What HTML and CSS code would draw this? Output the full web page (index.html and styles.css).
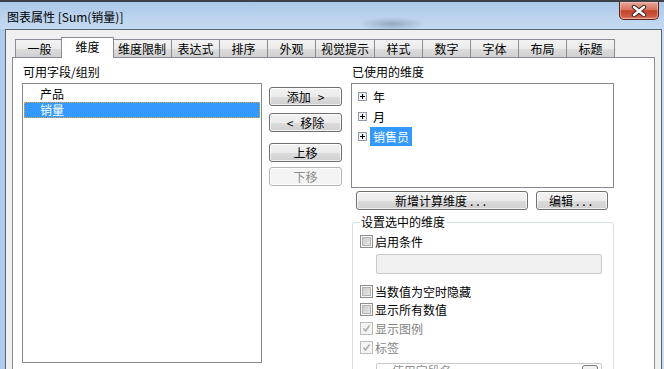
FILE: index.html
```html
<!DOCTYPE html>
<html>

<head>
    <meta charset="utf-8">
    <title>图表属性</title>
    <link rel="stylesheet" href="styles.css">
</head>

<body>
    <div class="window">
        <!-- 제목줄 -->
        <div class="titlebar">
            <span class="title">图表属性 [Sum(销量)]</span>
            <span class="close">
                <svg width="16" height="12" viewBox="0 0 16 12">
                    <path d="M3 2 L13 10 M13 2 L3 10" stroke="#3a2a28" stroke-width="4.4" stroke-linecap="round"/>
                    <path d="M3 2 L13 10 M13 2 L3 10" stroke="#fff" stroke-width="2.4" stroke-linecap="round"/>
                </svg>
            </span>
        </div>

        <div class="client">
            <!-- 탭 -->
            <div class="tabs">
                <div class="tab">一般</div>
                <div class="tab active">维度</div>
                <div class="tab">维度限制</div>
                <div class="tab">表达式</div>
                <div class="tab">排序</div>
                <div class="tab">外观</div>
                <div class="tab">视觉提示</div>
                <div class="tab">样式</div>
                <div class="tab">数字</div>
                <div class="tab">字体</div>
                <div class="tab">布局</div>
                <div class="tab">标题</div>
            </div>

            <div class="panel">
                <!-- 왼쪽: 필드 목록 -->
                <div class="col-left">
                    <div class="label">可用字段/组别</div>
                    <ul class="listbox fields">
                        <li>产品</li>
                        <li class="selected">销量</li>
                    </ul>
                </div>

                <!-- 가운데 버튼 -->
                <div class="col-mid">
                    <button class="btn">添加<span class="sp"></span>&gt;</button>
                    <button class="btn">&lt;<span class="sp"></span>移除</button>
                    <button class="btn move-up">上移</button>
                    <button class="btn disabled">下移</button>
                </div>

                <!-- 오른쪽: 사용된 차원 -->
                <div class="col-right">
                    <div class="label">已使用的维度</div>
                    <ul class="listbox tree">
                        <li><svg class="plus" width="9" height="9" viewBox="0 0 9 9"><rect x=".5" y=".5" width="8" height="8" fill="#eef0f3" stroke="#8d98a8"/><path d="M2 4.5 H7 M4.5 2 V7" stroke="#000"/></svg><span>年</span></li>
                        <li><svg class="plus" width="9" height="9" viewBox="0 0 9 9"><rect x=".5" y=".5" width="8" height="8" fill="#eef0f3" stroke="#8d98a8"/><path d="M2 4.5 H7 M4.5 2 V7" stroke="#000"/></svg><span>月</span></li>
                        <li><svg class="plus" width="9" height="9" viewBox="0 0 9 9"><rect x=".5" y=".5" width="8" height="8" fill="#eef0f3" stroke="#8d98a8"/><path d="M2 4.5 H7 M4.5 2 V7" stroke="#000"/></svg><span class="selected">销售员</span></li>
                    </ul>

                    <div class="btn-row">
                        <button class="btn wide">新增计算维度<span class="dots">...</span></button>
                        <button class="btn edit">编辑<span class="dots">...</span></button>
                    </div>

                    <fieldset class="group">
                        <legend>设置选中的维度</legend>
                        <div class="check first"><span class="cb"></span>启用条件</div>
                        <div class="field"></div>
                        <div class="check gap"><span class="cb"></span>当数值为空时隐藏</div>
                        <div class="check"><span class="cb"></span>显示所有数值</div>
                        <div class="check off"><span class="cb on"><svg width="9" height="9" viewBox="0 0 9 9"><path d="M1.5 4.5 L3.5 7 L7.5 1.5" fill="none" stroke="#a9a9a9" stroke-width="1.4"/></svg></span>显示图例</div>
                        <div class="check off"><span class="cb on"><svg width="9" height="9" viewBox="0 0 9 9"><path d="M1.5 4.5 L3.5 7 L7.5 1.5" fill="none" stroke="#a9a9a9" stroke-width="1.4"/></svg></span>标签</div>
                        <div class="field combo"><span>&lt;使用字段名&gt;</span><span class="drop"></span></div>
                    </fieldset>
                </div>
            </div>
        </div>
    </div>
</body>

</html>
```

FILE: styles.css
```css
/* 전체 창 */
body {
    margin: 0;
    width: 664px;
    height: 369px;
    overflow: hidden;
    background: linear-gradient(90deg, #aecbed, #c3d9f1 40%, #c9ddf2);
    font: 12px "Noto Sans CJK SC", "Liberation Sans", sans-serif;
    color: #000;
}

/* 제목줄 */
.titlebar {
    height: 27px;
    border-top: 2px solid #3d4248;
    display: flex;
    align-items: flex-start;
    background:
        radial-gradient(ellipse 34px 7px at 392px 22px, rgba(95, 115, 140, .45), transparent),
        linear-gradient(#abc8e8, #bcd4ee 60%, #c4daf1);
}
.title {
    padding: 7px 0 0 7px;
    line-height: 16px;
}
.close {
    margin-left: auto;
    margin-right: 5px;
    width: 40px;
    height: 18px;
    box-sizing: border-box;
    border: 1px solid #5e2119;
    border-top: none;
    border-radius: 0 0 5px 5px;
    background: linear-gradient(#e9a698, #d7735f 45%, #c2412b 52%, #cf5a43 85%, #de8a74);
    box-shadow: inset 0 0 0 1px rgba(255, 220, 210, .45);
    display: flex;
    align-items: center;
    justify-content: center;
}

/* 대화상자 영역 */
.client {
    margin: 0 2px 0 5px;
    height: 345px;
    border: 1px solid #5d6670;
    border-bottom: none;
    background: #f0f0f0;
    padding: 7px 6px 0;
}

/* 탭 */
.tabs {
    display: flex;
    align-items: flex-end;
    height: 20px;
    padding-left: 3px;
}
.tab {
    box-sizing: border-box;
    min-width: 49px;
    height: 18px;
    padding: 0 5px;
    margin-left: -1px;
    border: 1px solid #898c95;
    border-bottom: none;
    text-align: center;
    line-height: 17px;
    background: linear-gradient(#f3f3f3, #ebebeb 50%, #dddddd 51%, #d0d0d0);
}
.tab:first-child {
    margin-left: 0;
}
.tab.active {
    position: relative;
    z-index: 1;
    min-width: 53px;
    height: 21px;
    margin: 0 -1px -1px -3px;
    padding: 0 7px;
    line-height: 18px;
    background: #fff;
}

/* 탭 내용 */
.panel {
    height: 320px;
    border: 1px solid #898c95;
    background: #fff;
    display: flex;
    align-items: flex-start;
    padding: 6px 0 0 9px;
}
.label {
    line-height: 16px;
    padding-left: 1px;
}
.listbox {
    margin: 3px 0 0;
    padding: 2px 1px 0;
    list-style: none;
    border: 1px solid #828790;
    background: #fff;
}

.col-left {
    width: 240px;
}
.fields {
    height: 276px;
}
.fields li {
    height: 16px;
    line-height: 16px;
    padding-left: 16px;
}
.fields li.selected {
    background: #3399ff;
    color: #fff;
    border: 1px dotted #e8a24a;
    padding-left: 15px;
    height: 14px;
    line-height: 14px;
}

/* 가운데 버튼 */
.col-mid {
    margin: 23px 0 0 7px;
    width: 73px;
    display: flex;
    flex-direction: column;
}
.btn {
    box-sizing: border-box;
    height: 19px;
    width: 73px;
    padding: 0;
    font: inherit;
    line-height: 16px;
    color: #000;
    border: 1px solid #707070;
    border-radius: 3px;
    background: linear-gradient(#f2f2f2, #ebebeb 50%, #dddddd 51%, #cfcfcf);
    box-shadow: inset 0 0 0 1px rgba(255, 255, 255, .7);
}
.btn + .btn {
    margin-top: 7px;
}
.btn.move-up {
    margin-top: 11px;
}
.btn.disabled {
    margin-top: 5px;
    color: #8d8d8d;
    border-color: #b5b5b5;
    background: #f4f4f4;
}
.sp {
    display: inline-block;
    width: 7px;
}
.dots {
    letter-spacing: 3px;
    padding-left: 3px;
}

/* 오른쪽 */
.col-right {
    margin-left: 9px;
    width: 263px;
}
.tree {
    height: 101px;
}
.tree li {
    display: flex;
    align-items: center;
    height: 20px;
    padding-left: 5px;
}
.tree span {
    margin-left: 3px;
    padding: 0 3px;
    line-height: 19px;
}
.tree span.selected {
    background: #3399ff;
    color: #fff;
}

.btn-row {
    display: flex;
    margin-top: 3px;
    padding-left: 5px;
}
.btn-row .btn {
    margin-top: 0;
}
.btn.wide {
    width: 172px;
}
.btn.edit {
    width: 72px;
    margin-left: 8px;
}

/* 설정 그룹 */
.group {
    box-sizing: border-box;
    width: 262px;
    margin: 4px 0 0 1px;
    padding: 0 0 20px 7px;
    border: 1px solid #d5dfe5;
    border-radius: 3px;
}
.group legend {
    padding: 0 1px;
    line-height: 16px;
}
.check {
    display: flex;
    align-items: center;
    gap: 2px;
    height: 18px;
}
.check.first {
    margin-top: 2px;
}
.check.gap {
    margin-top: 8px;
}
.check.off {
    margin-top: 1px;
    color: #838383;
}
.cb {
    box-sizing: border-box;
    width: 13px;
    height: 13px;
    border: 1px solid #8e8f8f;
    background: linear-gradient(135deg, #c6c6c6, #ececec);
    box-shadow: inset 0 0 0 1px #f6f6f6, inset 0 0 0 2px #b5b5b5;
    display: flex;
    align-items: center;
    justify-content: center;
}
.cb.on {
    border-color: #bcbcbc;
    background: #f4f4f4;
    box-shadow: none;
}
.field {
    box-sizing: border-box;
    width: 226px;
    height: 20px;
    margin: 4px 0 0 16px;
    border: 1px solid #c9c9c9;
    border-radius: 2px;
    background: #f0f0f0;
}
.combo {
    margin-top: 7px;
    background: #fff;
    border-color: #c9c9c9;
    display: flex;
    align-items: flex-start;
    color: #909090;
    padding-left: 8px;
    line-height: 14px;
}
.drop {
    margin-left: auto;
    margin-right: 3px;
    margin-top: 1px;
    width: 16px;
    height: 16px;
    box-sizing: border-box;
    border: 1px solid #7a7a7a;
    border-radius: 3px;
    background: linear-gradient(#f4f4f4, #e0e0e0);
}
```
